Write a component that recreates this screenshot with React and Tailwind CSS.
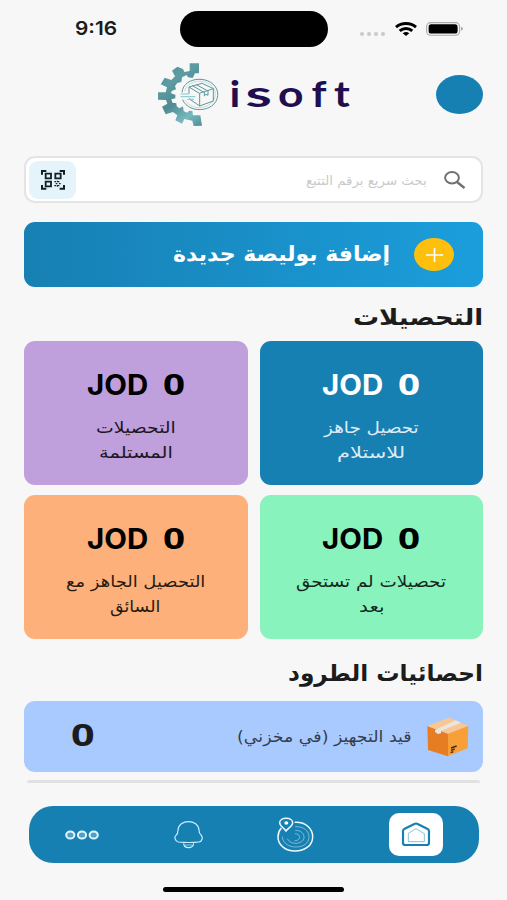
import React from "react";

const cards = [
  {
    color: "bg-[#1780b3] text-white",
    lines: [
      { text: "تحصيل جاهز", fit: "w-[95px]" },
      { text: "للاستلام", fit: "w-[68px]" },
    ],
  },
  {
    color: "bg-[#bf9fdc] text-black",
    lines: [
      { text: "التحصيلات", fit: "w-[80px]" },
      { text: "المستلمة", fit: "w-[74px]" },
    ],
  },
  {
    color: "bg-[#88f3bd] text-black",
    lines: [
      { text: "تحصيلات لم تستحق", fit: "w-[150px]" },
      { text: "بعد", fit: "w-[26px]" },
    ],
  },
  {
    color: "bg-[#fdb07a] text-black",
    lines: [
      { text: "التحصيل الجاهز مع", fit: "w-[139px]" },
      { text: "السائق", fit: "w-[50px]" },
    ],
  },
];

const StatusBar = () => {
  return (
    <div dir="ltr" className="flex h-[58px] items-center pl-[75px]">
      <p className="w-[105px] shrink-0 text-[19px] font-semibold font-['Inter',sans-serif]">
        <span className="inline-block origin-left scale-x-[1.1]">9:16</span>
      </p>
      <div className="h-[36px] w-[148px] shrink-0 rounded-full bg-black" />
      <div className="ml-[32px] mt-[9px] flex gap-[3px]">
        <span className="size-1 rounded-full bg-[#c9c9c9]" />
        <span className="size-1 rounded-full bg-[#c9c9c9]" />
        <span className="size-1 rounded-full bg-[#c9c9c9]" />
        <span className="size-1 rounded-full bg-[#c9c9c9]" />
      </div>
      <svg className="ml-[10px]" width="22" height="14" viewBox="0 0 22 14" fill="none" stroke="#000" strokeWidth="3">
        <path d="M1 5.1C6.600 .3 15.400 .3 21 5.100" />
        <path d="M4.700 8.900c3.700-3.100 8.900-3.100 12.600 0" />
        <path d="M7.700 11.200q3.300-2.400 6.600 0L11 14Z" fill="#000" stroke="none" />
      </svg>
      <svg className="ml-[9px]" width="38" height="14" viewBox="0 0 38 14">
        <rect x=".6" y=".6" width="33" height="12.600" rx="4" fill="none" stroke="#aaa" strokeWidth="1.100" />
        <rect x="2.600" y="2.300" width="29" height="9.300" rx="2.600" />
        <path d="M35.300 4.800q3 2 0 4Z" fill="#888" />
      </svg>
    </div>
  );
};

const Logo = () => {
  return (
    <div dir="ltr" className="flex items-center">
      <svg width="66.700" height="68.300" viewBox="465 180 200 205">
        <defs>
          <linearGradient id="gear" gradientUnits="userSpaceOnUse" x1="474" y1="190" x2="606" y2="377">
            <stop offset="0" stopColor="#4c8e96" />
            <stop offset=".3" stopColor="#5d9ca3" />
            <stop offset=".55" stopColor="#4f8a91" />
            <stop offset=".8" stopColor="#78b9bf" />
            <stop offset="1" stopColor="#4c8f98" />
          </linearGradient>
        </defs>
        <g fill="url(#gear)">
          <path d="M569 190H597V220H585L578 234L564 232L560 225L546 232L544 246L532 249L525 258L528 268L515 273L513 280L526 284V295L514 298L517 308L529 310L530 319L538 325L549 319L551 334L562 338L567 332L577 333L579 346H601L606 377L581 378L577 362L553 357L546 371L526 361L532 346L519 336L497 343L486 320L502 311L498 300L474 299V277H497L501 262L482 253L494 233L514 240L525 229L516 212L532 200L549 207L553 216L569 213Z" />
        </g>
        <g fill="none" stroke="#5b989e" strokeWidth="3">
          <path d="M546 277C551 226 641 224 653 276C660 337 566 346 548 299" />
          <path d="M553 274C567 232 632 236 645 273C655 322 581 342 555 300" strokeWidth="1.500" opacity=".6" />
          <path d="M567 261L598 280L640 266L606 250ZM567 261V281M567 296L599 318L640 303V266M599 280V318M577 257L610 276M589 254L622 272M613 275V288L618 283L624 286V271" />
          <path d="M542 282H568M542 290H586M562 298H582" stroke="#82c6cc" />
        </g>
      </svg>
      <svg width="124" height="36" viewBox="0 0 124 36" className="ml-[8px] overflow-visible">
        <g fill="#200f50" fontFamily="Lato, sans-serif" fontWeight="700" fontSize="37">
          <text transform="translate(-0.500 31) scale(1.150 1)">i</text>
          <text transform="translate(15.500 31) scale(1.620 1)">s</text>
          <text transform="translate(48 31) scale(1.200 1)">o</text>
          <text transform="translate(81.500 31) scale(1.130 1)">f</text>
          <text transform="translate(104 31) scale(1.150 1)">t</text>
        </g>
      </svg>
    </div>
  );
};

const QrIcon = () => {
  return (
    <svg width="26" height="21.700" viewBox="120 85 78 65" fill="none" stroke="#111f26" strokeWidth="6">
      <path d="M126 102V91H139M179 91H192V102M126 133V144H139M179 144H192V133" />
      <path d="M137 99H153V113H137ZM166 99H182V113H166ZM137 123H153V137H137Z" strokeWidth="5.500" />
      <path d="M163 123h5m5 0h5M167 129h5m5 0h5M163 135h5m5 0h5M172 120v5m0 8v5" strokeWidth="3.500" />
    </svg>
  );
};

const PackageIcon = () => {
  return (
    <svg width="42" height="40" viewBox="532 199 126 120">
      <path d="M533 226L595 249V317L535 298Z" fill="#e77d22" />
      <path d="M595 249L656 225L654 293L595 317Z" fill="#f99f38" />
      <path d="M533 226L598 201L656 225L595 249Z" fill="#fbc690" />
      <path d="M556 238L618 209L634 216L574 241V248L565 250L556 244Z" fill="#e8e6e0" />
      <path d="M604 292L621 286M604 299L615 295M603 306L611 303" stroke="#402718" strokeWidth="4" />
    </svg>
  );
};

/* stretches a line of text to the width of its box */
const Line = ({ children, fit, size = 16, weight = 400, className = "" }) => {
  const ref = React.useRef(null);
  const [scale, setScale] = React.useState(1);

  React.useLayoutEffect(() => {
    const el = ref.current;
    setScale(el.parentElement.clientWidth / el.offsetWidth);
  }, []);

  return (
    <p dir="rtl" className={`${fit} ${className} whitespace-nowrap`}>
      <span
        ref={ref}
        className="inline-block origin-right"
        style={{ transform: `scaleX(${scale})`, fontSize: size, fontWeight: weight }}
      >
        {children}
      </span>
    </p>
  );
};

const Card = ({ color, lines }) => {
  return (
    <div className={`flex h-[144px] flex-col items-center rounded-[11px] pt-[24px] ${color}`}>
      <div dir="ltr" className="flex h-[40px] items-center gap-[15px]">
        <Line fit="w-[61px]" size={28} weight={700} className="font-['Inter',sans-serif]">
          JOD
        </Line>
        <Line fit="w-[22px]" size={28} weight={700} className="-mt-[3px] font-['Open_Sans',sans-serif]">
          0
        </Line>
      </div>
      <div className="mt-[10px] flex flex-col items-center leading-[25px] opacity-85">
        {lines.map((line) => (
          <Line key={line.text} fit={line.fit} size={16}>
            {line.text}
          </Line>
        ))}
      </div>
    </div>
  );
};

const BottomNav = () => {
  return (
    <div className="ml-[29px] mr-[28px] mt-[23px] flex h-[57px] items-center justify-between rounded-[24px] bg-[#1780b3] px-[36px]">
      <div className="flex h-[43px] w-[54px] items-center justify-center rounded-[10px] bg-white">
        <svg width="30" height="25" viewBox="453 516 90 75" fill="none" stroke="#1780b3">
          <path d="M459 543Q459 539 464 536L493 522Q498 519 503 522L533 537Q537 539 537 544V579Q537 585 530 585H466Q459 585 459 579Z" strokeWidth="6.500" />
          <path d="M475 550L498 536L523 551V575H475Z" strokeWidth="2.500" opacity=".6" />
        </svg>
      </div>
      <svg width="37" height="35" viewBox="83 500 111 105" fill="none" stroke="#eef9ff" strokeWidth="4.500">
        <path d="M136 516C171 514 190 537 190 559C190 586 166 602 137 602C107 602 86 583 86 559C86 549 90 540 96 533" />
        <path d="M110 542C103 532 91 527 91 517C91 499 130 499 130 517C130 527 118 532 110 542Z" />
        <ellipse cx="111" cy="518" rx="6" ry="5" fill="#fff" stroke="none" />
        <path d="M138 529C164 528 179 542 179 560C179 578 162 590 140 590C119 590 99 578 99 559M138 540C155 540 165 550 164 562C163 573 151 579 139 579C126 579 117 572 114 565M137 550C149 551 153 558 150 564C148 569 143 571 136 571" strokeWidth="2.200" opacity=".65" />
      </svg>
      <svg width="29" height="29" viewBox="493 509 87 87" fill="none" stroke="#c9efff" strokeWidth="3.500">
        <path d="M506 575C496 573 493 560 499 555Q505 551 505 540C506 505 567 505 568 540Q568 549 574 554C581 561 577 574 568 575Q537 578 506 575Z" />
        <path d="M522 579Q523 592 537 592Q550 592 552 579" />
        <path d="M526 584H547" strokeWidth="2" />
      </svg>
      <svg width="34" height="10" viewBox="0 0 34 10" fill="#4fa0c6" stroke="#dff6ff" strokeWidth="2">
        <ellipse cx="5.300" cy="5" rx="4.100" ry="3.600" />
        <ellipse cx="17" cy="5" rx="4.100" ry="3.600" />
        <ellipse cx="28.700" cy="5" rx="4.100" ry="3.600" />
      </svg>
    </div>
  );
};

const App = () => {
  return (
    <div
      dir="rtl"
      className="flex h-[900px] w-[507px] flex-col overflow-hidden bg-[#f7f7f7] text-[#1c1c1c] font-['DejaVu_Sans',sans-serif]"
    >
      <StatusBar />
      <div className="flex h-[72px] items-center justify-between pl-[155px] pr-[24px]">
        <div className="h-[39px] w-[47px] rounded-[50%] bg-[#1780b3]" />
        <Logo />
      </div>

      <div className="mx-[24px] mt-[26px] flex h-[47px] items-center rounded-[11px] border-2 border-[#e4e4e4] bg-white pl-[3px] pr-[15px]">
        <svg width="22" height="18" viewBox="0 0 22 18" fill="none" stroke="#707070" strokeWidth="2">
          <ellipse cx="8" cy="6.700" rx="6.900" ry="5.700" />
          <path d="M13 11L20.500 17" strokeWidth="2.400" />
        </svg>
        <Line fit="w-[121px]" size={13} className="mr-[17px] text-[#cacaca]">
          بحث سريع برقم التتبع
        </Line>
        <div className="mr-auto flex h-[38px] w-[47px] items-center justify-center rounded-[9px] bg-[#e5f4fb]">
          <QrIcon />
        </div>
      </div>

      <div className="mx-[24px] mt-[19px] flex h-[65px] items-center rounded-[11px] bg-gradient-to-r from-[#1780b3] to-[#1b9edc] pr-[29px] text-white">
        <div className="flex h-[33px] w-[40px] items-center justify-center rounded-[50%] bg-[#fec00c]">
          <svg width="17" height="14" viewBox="0 0 17 14" stroke="#fff" strokeWidth="1.600">
            <path d="M0 7H17M8.500 0V14" />
          </svg>
        </div>
        <Line fit="w-[217px]" size={21} weight={700} className="mr-[24px]">
          إضافة بوليصة جديدة
        </Line>
      </div>

      <div className="flex h-[54px] items-center px-[24px] pt-[7px]">
        <Line fit="w-[130px]" size={23} weight={700}>
          التحصيلات
        </Line>
      </div>
      <div className="grid grid-cols-2 gap-x-[12px] gap-y-[10px] px-[24px]">
        {cards.map((card) => (
          <Card key={card.color} {...card} />
        ))}
      </div>

      <div className="flex h-[62px] items-center px-[24px] pt-[7px]">
        <Line fit="w-[195px]" size={23} weight={700}>
          احصائيات الطرود
        </Line>
      </div>
      <div className="mx-[24px] flex h-[71px] items-center rounded-[11px] bg-[#a9caff] pl-[47px] pr-[14px]">
        <PackageIcon />
        <Line fit="w-[175px]" size={16} className="mr-[15px] text-[#343d4d]">
          قيد التجهيز (في مخزني)
        </Line>
        <Line fit="w-[24px]" size={31} weight={700} className="mr-auto -mt-[5px] font-['Open_Sans',sans-serif]">
          0
        </Line>
      </div>
      <div className="mx-[27px] mt-[8px] h-[3px] rounded-t-full bg-[#e1e1e1]" />

      <BottomNav />
      <div className="mx-auto mt-[24px] h-[5px] w-[181px] rounded-full bg-black" />
    </div>
  );
};

export default App;
